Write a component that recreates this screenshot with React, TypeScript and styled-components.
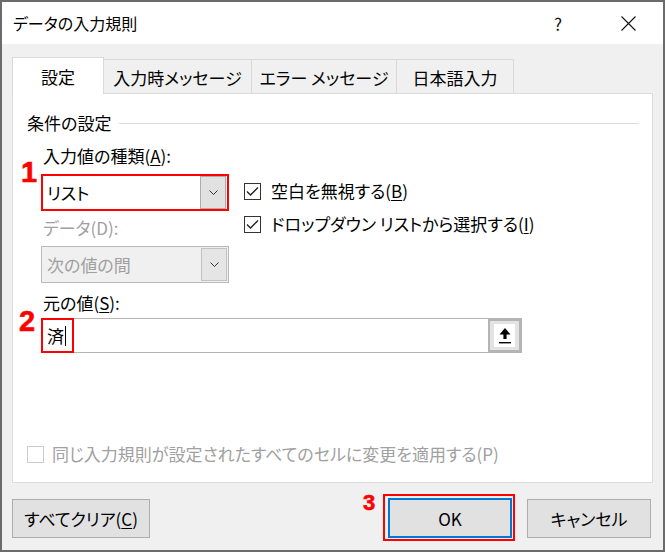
import styled, { createGlobalStyle } from "styled-components";

const GlobalStyle = createGlobalStyle`
  html, body {
    margin: 0;
    padding: 0;
  }
  body {
    font-family: "Noto Sans CJK JP", "Noto Sans", sans-serif;
    font-feature-settings: "palt";
    background: #6b6b6b;
    color: #000;
  }
`;

const Dialog = styled.div`
  width: 665px;
  height: 552px;
  box-sizing: border-box;
  border: 2px solid #6b6b6b;
  background: #f0f0f0;
  display: flex;
  flex-direction: column;
`;

const TitleBar = styled.div`
  height: 42px;
  background: #fff;
  display: flex;
  align-items: center;
  padding: 0 0 0 11px;
  font-size: 16px;
`;

const TitleText = styled.div`
  flex: 1;
  line-height: 20px;
`;

const TitleButton = styled.div`
  width: 70px;
  height: 42px;
  display: flex;
  align-items: center;
  justify-content: center;
  font-size: 17px;
  color: #111;
`;

const Body = styled.div`
  flex: 1;
  display: flex;
  flex-direction: column;
  padding: 13px 10px 13px 10px;
`;

const TabRow = styled.div`
  display: flex;
  align-items: flex-end;
  height: 37px;
  margin-bottom: -1px;
  position: relative;
  z-index: 1;
`;

const Tab = styled.div<{ $active?: boolean; $w: number }>`
  box-sizing: border-box;
  width: ${(p) => p.$w}px;
  height: ${(p) => (p.$active ? 37 : 35)}px;
  margin-left: -1px;
  &:first-child {
    margin-left: 0;
  }
  border: 1px solid #d9d9d9;
  border-bottom: ${(p) => (p.$active ? "none" : "1px solid #d9d9d9")};
  background: ${(p) => (p.$active ? "#fff" : "#f0f0f0")};
  display: flex;
  align-items: center;
  justify-content: center;
  font-size: 17px;
  padding-top: ${(p) => (p.$active ? 0 : 1)}px;
  position: relative;
  z-index: ${(p) => (p.$active ? 2 : 1)};
`;

const Panel = styled.div`
  position: relative;
  box-sizing: border-box;
  height: 390px;
  background: #fff;
  border: 1px solid #dcdcdc;
  display: flex;
  flex-direction: column;
  padding: 17px 13px 0 14px;
  font-size: 17px;
`;

const SectionHeader = styled.div`
  display: flex;
  align-items: center;
  line-height: 24px;
  &::after {
    content: "";
    flex: 1;
    height: 1px;
    background: #dcdcdc;
    margin-left: 8px;
  }
`;

const Columns = styled.div`
  display: flex;
  gap: 15px;
  margin-top: 9px;
  padding-left: 14px;
`;

const LeftColumn = styled.div`
  width: 188px;
  display: flex;
  flex-direction: column;
`;

const RightColumn = styled.div`
  display: flex;
  flex-direction: column;
  gap: 9px;
  padding-top: 35px;
`;

const FieldLabel = styled.div<{ $disabled?: boolean; $gap?: number }>`
  line-height: 24px;
  padding-left: 2px;
  margin-top: ${(p) => p.$gap ?? 0}px;
  margin-bottom: 6px;
  color: ${(p) => (p.$disabled ? "#a0a0a0" : "#000")};
  u {
    text-decoration-thickness: 1px;
    text-underline-offset: 2px;
  }
`;

const Combo = styled.div<{ $disabled?: boolean; $marked?: boolean }>`
  box-sizing: border-box;
  height: 37px;
  display: flex;
  align-items: center;
  border: ${(p) => (p.$marked ? "2px solid #f00" : "1px solid #b9b9b9")};
  background: ${(p) => (p.$disabled ? "#f0f0f0" : "#fff")};
  padding: ${(p) => (p.$marked ? "0 0 0 4px" : "0 0 0 5px")};
  color: ${(p) => (p.$disabled ? "#a0a0a0" : "#000")};
`;

const ComboText = styled.div`
  flex: 1;
  line-height: 24px;
`;

const ComboArrow = styled.div<{ $disabled?: boolean }>`
  box-sizing: border-box;
  width: 26px;
  height: 33px;
  margin-right: 1px;
  background: ${(p) => (p.$disabled ? "#e5e5e5" : "#e1e1e1")};
  border: 1px solid ${(p) => (p.$disabled ? "#c2c2c2" : "#adadad")};
  display: flex;
  align-items: center;
  justify-content: center;
`;

const CheckRow = styled.label<{ $disabled?: boolean }>`
  display: flex;
  align-items: center;
  gap: 10px;
  line-height: 24px;
  color: ${(p) => (p.$disabled ? "#a0a0a0" : "#000")};
  u {
    text-decoration-thickness: 1px;
    text-underline-offset: 2px;
  }
`;

const Box = styled.span<{ $disabled?: boolean }>`
  box-sizing: border-box;
  width: 17px;
  height: 17px;
  border: 1px solid ${(p) => (p.$disabled ? "#cccccc" : "#333")};
  background: #fff;
  display: flex;
  align-items: center;
  justify-content: center;
`;

const SourceLabel = styled(FieldLabel)`
  margin-left: 14px;
  margin-top: 8px;
  margin-bottom: 3px;
`;

const SourceField = styled.div`
  position: relative;
  box-sizing: border-box;
  margin-left: 14px;
  width: 481px;
  height: 35px;
  border: 1px solid #b4b4b4;
  display: flex;
  align-items: center;
  padding-left: 5px;
`;

const SourceText = styled.div`
  flex: 1;
  display: flex;
  align-items: center;
  line-height: 24px;
  &::after {
    content: "";
    width: 1px;
    height: 20px;
    background: #000;
    margin-left: 1px;
  }
`;

const RefButton = styled.div`
  box-sizing: border-box;
  width: 33px;
  height: 33px;
  border: 2px solid #b4b4b4;
  background: #e3e3e3;
  padding: 3px 4px;
  display: flex;
`;

const RefInner = styled.div`
  flex: 1;
  background: #fff;
  display: flex;
  align-items: center;
  justify-content: center;
`;

const Marker = styled.div`
  position: absolute;
  left: -1px;
  top: -1px;
  width: 33px;
  height: 35px;
  box-sizing: border-box;
  border: 2px solid #f00;
`;

const BottomCheck = styled(CheckRow)`
  margin-top: auto;
  margin-bottom: 16px;
  gap: 8px;
`;

const Badge = styled.div<{ $x: number; $y: number; $size?: number }>`
  position: absolute;
  left: ${(p) => p.$x}px;
  top: ${(p) => p.$y}px;
  font-family: "Liberation Sans", Arial, sans-serif;
  font-weight: bold;
  font-size: ${(p) => p.$size ?? 29}px;
  line-height: 1;
  color: #f00;
  -webkit-text-stroke: 0.6px #f00;
`;

const ButtonRow = styled.div`
  display: flex;
  align-items: center;
  margin-top: 15px;
  padding-right: 2px;
`;

const Button = styled.div<{ $w: number; $default?: boolean }>`
  box-sizing: border-box;
  width: ${(p) => p.$w}px;
  height: ${(p) => (p.$default ? 40 : 39)}px;
  background: #e1e1e1;
  border: ${(p) => (p.$default ? "2px solid #0078d7" : "1px solid #adadad")};
  display: flex;
  align-items: center;
  justify-content: center;
  font-size: 17px;
  u {
    text-decoration-thickness: 1px;
    text-underline-offset: 2px;
  }
`;

const OkWrap = styled.div`
  position: relative;
  margin-left: auto;
  margin-right: 15px;
  &::after {
    content: "";
    position: absolute;
    left: -5px;
    top: -4px;
    right: -3px;
    bottom: -3px;
    border: 2px solid #f00;
  }
`;

const Chevron = ({ color = "#333" }: { color?: string }) => (
  <svg width="9" height="5" viewBox="0 0 9 5">
    <polyline points="0.5,0.5 4.5,4.5 8.5,0.5" fill="none" stroke={color} strokeWidth="1" />
  </svg>
);

const Check = () => (
  <svg width="13" height="11" viewBox="0 0 13 11">
    <polyline points="1,5.5 4.5,9 12,1.5" fill="none" stroke="#222" strokeWidth="1.3" />
  </svg>
);

const UpArrow = () => (
  <svg width="12" height="16" viewBox="0 0 12 16">
    <polygon points="6,0 11.5,6.5 7.6,6.5 7.6,11 4.4,11 4.4,6.5 0.5,6.5" fill="#000" />
    <rect x="0" y="14" width="12" height="1.4" fill="#000" />
  </svg>
);

const CloseIcon = () => (
  <svg width="15" height="15" viewBox="0 0 15 15">
    <path d="M0.5 0.5 L14.5 14.5 M14.5 0.5 L0.5 14.5" stroke="#111" strokeWidth="1.1" />
  </svg>
);

export default function App() {
  return (
    <>
      <GlobalStyle />
      <Dialog>
        <TitleBar>
          <TitleText>データの入力規則</TitleText>
          <TitleButton>?</TitleButton>
          <TitleButton>
            <CloseIcon />
          </TitleButton>
        </TitleBar>
        <Body>
          <TabRow>
            <Tab $active $w={92}>設定</Tab>
            <Tab $w={149}>入力時メッセージ</Tab>
            <Tab $w={146}>エラー メッセージ</Tab>
            <Tab $w={118}>日本語入力</Tab>
          </TabRow>
          <Panel>
            <SectionHeader>条件の設定</SectionHeader>
            <Columns>
              <LeftColumn>
                <FieldLabel>
                  入力値の種類(<u>A</u>):
                </FieldLabel>
                <Combo $marked>
                  <ComboText>リスト</ComboText>
                  <ComboArrow>
                    <Chevron />
                  </ComboArrow>
                </Combo>
                <FieldLabel $disabled $gap={5}>
                  データ(D):
                </FieldLabel>
                <Combo $disabled>
                  <ComboText>次の値の間</ComboText>
                  <ComboArrow $disabled>
                    <Chevron />
                  </ComboArrow>
                </Combo>
              </LeftColumn>
              <RightColumn>
                <CheckRow>
                  <Box>
                    <Check />
                  </Box>
                  <span>
                    空白を無視する(<u>B</u>)
                  </span>
                </CheckRow>
                <CheckRow>
                  <Box>
                    <Check />
                  </Box>
                  <span>
                    ドロップダウン リストから選択する(<u>I</u>)
                  </span>
                </CheckRow>
              </RightColumn>
            </Columns>
            <SourceLabel>
              元の値(<u>S</u>):
            </SourceLabel>
            <SourceField>
              <SourceText>済</SourceText>
              <RefButton>
                <RefInner>
                  <UpArrow />
                </RefInner>
              </RefButton>
              <Marker />
            </SourceField>
            <BottomCheck $disabled>
              <Box $disabled />
              <span>同じ入力規則が設定されたすべてのセルに変更を適用する(P)</span>
            </BottomCheck>
            <Badge $x={8} $y={64}>1</Badge>
            <Badge $x={6} $y={213}>2</Badge>
          </Panel>
          <ButtonRow>
            <Button $w={138}>
              すべてクリア(<u>C</u>)
            </Button>
            <OkWrap>
              <Badge $x={-25} $y={-6} $size={22}>3</Badge>
              <Button $w={124} $default>
                OK
              </Button>
            </OkWrap>
            <Button $w={124}>キャンセル</Button>
          </ButtonRow>
        </Body>
      </Dialog>
    </>
  );
}
